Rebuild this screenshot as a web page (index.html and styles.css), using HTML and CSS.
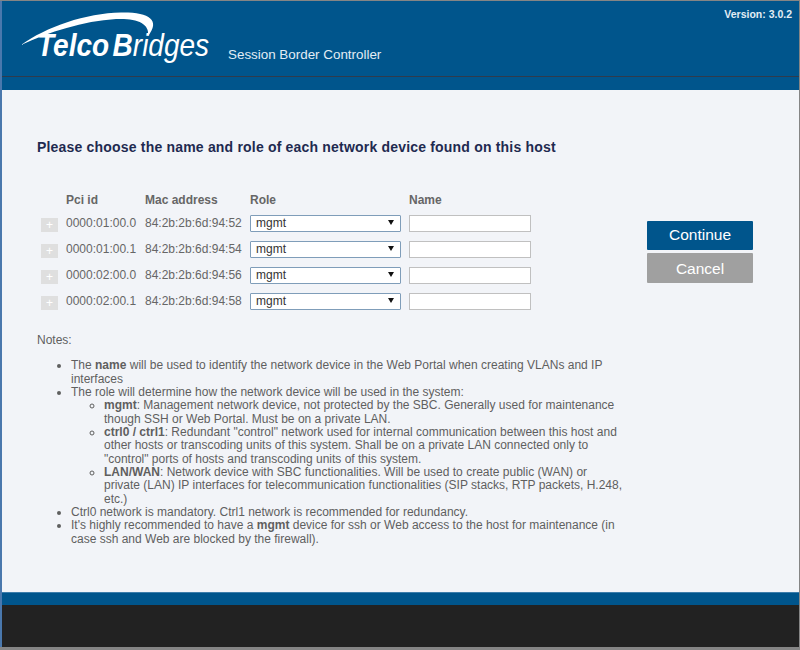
FILE: index.html
```html
<!DOCTYPE html>
<html lang="en">
<head>
<meta charset="utf-8">
<title>TelcoBridges Session Border Controller</title>
<link rel="stylesheet" href="styles.css">
</head>
<body>
<div class="page">
  <header class="header">
    <div class="header-top">
      <div class="logo">
        <svg class="swoosh" width="140" height="36" viewBox="0 0 140 36"><path d="M0 33C25 15 65 1 100 .5C128 0 140 8 127 24C129 11 115 6 95 7C62 9 28 20 0 33Z" fill="#fff"/></svg>
        <span class="logo-text"><b class="logo-bold">Telco</b><b class="logo-bold logo-b">B</b>ridges</span>
      </div>
      <div class="product">Session Border Controller</div>
      <div class="version">Version: 3.0.2</div>
    </div>
    <div class="header-band"></div>
  </header>
  <main class="content">
    <h1 class="title">Please choose the name and role of each network device found on this host</h1>
    <div class="columns">
      <div class="left">
        <div class="device-table">
          <div class="row head">
            <span class="c-add"></span><span class="c-pci">Pci id</span><span class="c-mac">Mac address</span><span class="c-role">Role</span><span class="c-name">Name</span>
          </div>
          <div class="row">
            <span class="c-add"><span class="add">+</span></span><span class="c-pci">0000:01:00.0</span><span class="c-mac">84:2b:2b:6d:94:52</span>
            <span class="c-role"><span class="select">mgmt</span></span><span class="c-name"><input class="input" type="text"></span>
          </div>
          <div class="row">
            <span class="c-add"><span class="add">+</span></span><span class="c-pci">0000:01:00.1</span><span class="c-mac">84:2b:2b:6d:94:54</span>
            <span class="c-role"><span class="select">mgmt</span></span><span class="c-name"><input class="input" type="text"></span>
          </div>
          <div class="row">
            <span class="c-add"><span class="add">+</span></span><span class="c-pci">0000:02:00.0</span><span class="c-mac">84:2b:2b:6d:94:56</span>
            <span class="c-role"><span class="select">mgmt</span></span><span class="c-name"><input class="input" type="text"></span>
          </div>
          <div class="row">
            <span class="c-add"><span class="add">+</span></span><span class="c-pci">0000:02:00.1</span><span class="c-mac">84:2b:2b:6d:94:58</span>
            <span class="c-role"><span class="select">mgmt</span></span><span class="c-name"><input class="input" type="text"></span>
          </div>
        </div>
        <div class="notes">
          <p class="notes-title">Notes:</p>
          <ul class="list">
            <li>The <b>name</b> will be used to identify the network device in the Web Portal when creating VLANs and IP interfaces</li>
            <li>The role will determine how the network device will be used in the system:
              <ul class="sublist">
                <li><b>mgmt</b>: Management network device, not protected by the SBC. Generally used for maintenance though SSH or Web Portal. Must be on a private LAN.</li>
                <li><b>ctrl0 / ctrl1</b>: Redundant "control" network used for internal communication between this host and other hosts or transcoding units of this system. Shall be on a private LAN connected only to "control" ports of hosts and transcoding units of this system.</li>
                <li><b>LAN/WAN</b>: Network device with SBC functionalities. Will be used to create public (WAN) or private (LAN) IP interfaces for telecommunication functionalities (SIP stacks, RTP packets, H.248, etc.)</li>
              </ul>
            </li>
            <li>Ctrl0 network is mandatory. Ctrl1 network is recommended for redundancy.</li>
            <li>It's highly recommended to have a <b>mgmt</b> device for ssh or Web access to the host for maintenance (in case ssh and Web are blocked by the firewall).</li>
          </ul>
        </div>
      </div>
      <div class="actions">
        <button class="btn primary" type="button">Continue</button>
        <button class="btn secondary" type="button">Cancel</button>
      </div>
    </div>
  </main>
  <footer class="footer">
    <div class="footer-band"></div>
    <div class="footer-dark"></div>
  </footer>
</div>
</body>
</html>
```
FILE: styles.css
```css
* { box-sizing: border-box; }
html, body { margin: 0; padding: 0; }
body {
  width: 800px;
  height: 650px;
  overflow: hidden;
  background: #858585;
  font-family: "Liberation Sans", Arial, sans-serif;
  color: #5f5f5f;
}
.page {
  width: 799px;
  height: 646px;
  margin-top: 1px;
  border-left: 2px solid #4a78ad;
  display: flex;
  flex-direction: column;
}
.header { background: #00558c; flex: none; }
.header-top {
  height: 76px;
  position: relative;
  display: flex;
  align-items: flex-start;
  border-bottom: 1px solid #2f3b4c;
}
.logo { position: relative; width: 207px; height: 75px; margin-left: 19px; flex: none; }
.swoosh { position: absolute; left: 0; top: 11px; }
.logo-text {
  position: absolute;
  left: 16px;
  top: 27px;
  font-size: 32px;
  line-height: 34px;
  font-style: italic;
  color: #fff;
  white-space: nowrap;
  transform: scaleX(.875);
  transform-origin: left top;
}
.logo-bold { font-weight: 700; }
.logo-b { margin-left: 4px; }
.product { margin: 46px 0 0 0; font-size: 13.400px; line-height: 16px; color: #e3edf5; white-space: nowrap; }
.version { position: absolute; right: 7px; top: 6px; font-size: 10.500px; line-height: 14px; font-weight: 700; color: #e3edf5; }
.header-band { height: 13px; background: #00558c; }
.content { flex: 1; background: #f2f4f8; padding-top: 48px; min-height: 0; }
.title { margin: 0 0 0 35px; font-size: 14px; line-height: 18px; font-weight: 700; letter-spacing: .19px; color: #1f2a50; }
.columns { display: flex; padding-top: 34px; }
.left { width: 645px; flex: none; }
.device-table { display: flex; flex-direction: column; padding-left: 39px; }
.row { display: flex; align-items: center; height: 26px; font-size: 12px; color: #666; white-space: nowrap; }
.row.head { height: 20px; font-weight: 700; }
.c-add { width: 25px; flex: none; }
.c-pci { width: 79px; flex: none; }
.c-mac { width: 105px; flex: none; }
.c-role { width: 159px; flex: none; }
.c-name { width: 122px; flex: none; }
.add { display: block; width: 17px; height: 14px; background: #dfdfdf; color: #fff; font-size: 12px; line-height: 14px; font-weight: 400; text-align: center; margin-top: 3px; }
.select {
  display: block;
  position: relative;
  width: 151px;
  height: 17px;
  padding-left: 5px;
  background: #fff;
  border: 1px solid #7f9db9;
  border-radius: 1px;
  font-size: 12px;
  line-height: 15px;
  color: #333;
}
.select::after {
  content: "";
  position: absolute;
  right: 6px;
  top: 4px;
  border-left: 3px solid transparent;
  border-right: 3px solid transparent;
  border-top: 5px solid #111;
}
.input { display: block; width: 122px; height: 17px; padding: 0; background: #fff; border: 1px solid #c0c0c0; border-radius: 0; }
.notes { margin: 20px 0 0 35px; font-size: 12px; line-height: 13.350px; color: #5f5f5f; }
.notes-title { margin: 0 0 12px; }
.list { margin: 0; padding-left: 34px; }
.list > li { width: 553px; }
.sublist { margin: 0; padding-left: 33px; list-style: circle; }
.actions { display: flex; flex-direction: column; gap: 3px; width: 106px; flex: none; padding-top: 31px; }
.btn { display: block; width: 106px; height: 29px; padding: 0; border: 0; border-radius: 1px; font-family: inherit; font-size: 15.500px; color: #fff; }
.primary { background: #00558c; padding-bottom: 2px; }
.secondary { background: #a0a0a0; height: 30px; padding-top: 2px; }
.footer { flex: none; }
.footer-band { height: 13px; background: #00558c; border-top: 1px solid #3d7dab; }
.footer-dark { height: 42px; background: #222; }
```
